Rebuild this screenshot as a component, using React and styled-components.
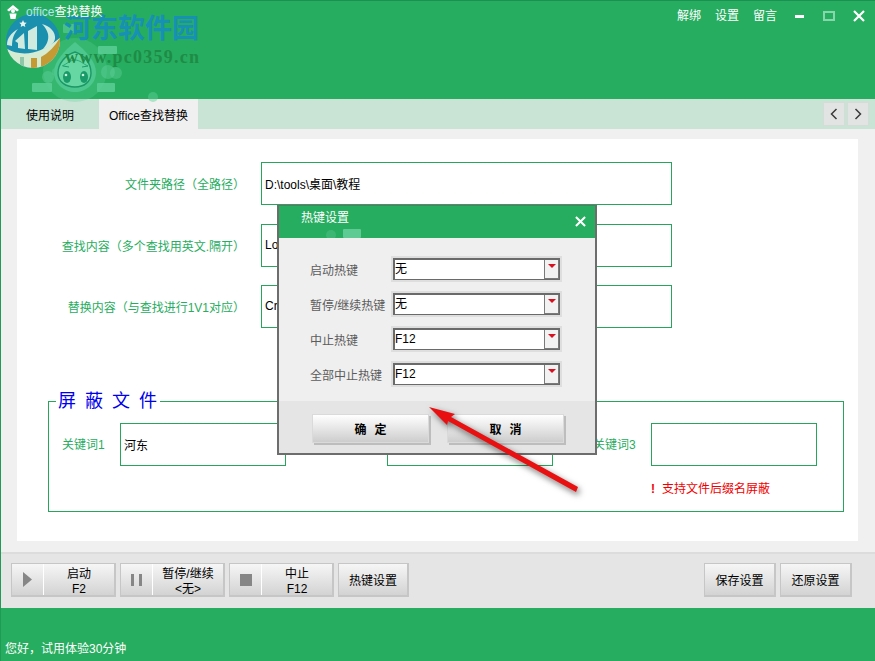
import styled, { createGlobalStyle } from "styled-components";

const GlobalStyle = createGlobalStyle`
  html, body {
    margin: 0;
    padding: 0;
    overflow: hidden;
  }
  body {
    font-family: "Liberation Sans", "Noto Sans CJK SC", sans-serif;
    font-size: 12px;
  }
  * {
    box-sizing: border-box;
  }
`;

const Window = styled.div`
  position: relative;
  width: 875px;
  height: 661px;
  display: flex;
  flex-direction: column;
  overflow: hidden;
  border-left: 1px solid #1f9a57;
  background: #f0f0f0;
`;

const TitleBar = styled.header`
  height: 99px;
  flex: none;
  display: flex;
  justify-content: space-between;
  align-items: flex-start;
  background: #27ad60;
  border-top: 1px solid #1c8f52;
  color: #fff;
`;

const AppName = styled.div`
  position: relative;
  z-index: 1;
  display: flex;
  align-items: flex-start;
  gap: 7px;
  padding: 4px 0 0 6px;
  line-height: 15px;
`;

const AppNameLatin = styled.span`
  color: #b5e4f2;
`;

const TitleRight = styled.div`
  display: flex;
  align-items: center;
  padding: 6px 1px 0 0;
`;

const MenuLinks = styled.div`
  display: flex;
  gap: 14px;
  margin-right: 7px;
  line-height: 18px;
`;

const WinButton = styled.button`
  width: 30px;
  height: 18px;
  padding: 0;
  border: none;
  background: none;
  display: flex;
  align-items: center;
  justify-content: center;
`;

const Watermark = styled.div`
  position: absolute;
  left: -1px;
  top: 0;
  width: 210px;
  height: 112px;
  pointer-events: none;
`;

const WatermarkName = styled.div`
  position: absolute;
  left: 64px;
  top: 10px;
  font-size: 27px;
  line-height: 38px;
  font-weight: 700;
  white-space: nowrap;
  color: #1690b4;
`;

const WatermarkUrl = styled.div`
  position: absolute;
  left: 65px;
  top: 47px;
  font-family: "Liberation Serif", serif;
  font-size: 18px;
  line-height: 20px;
  font-weight: 700;
  letter-spacing: 1.25px;
  white-space: nowrap;
  color: #1e8c46;
`;

const TabBar = styled.nav`
  height: 30px;
  flex: none;
  display: flex;
  align-items: stretch;
  background: #c9e3d5;
`;

const Tab = styled.div`
  width: ${(p) => (p.$active ? "99px" : "98px")};
  display: flex;
  align-items: center;
  justify-content: center;
  color: #000;
  background: ${(p) => (p.$active ? "#f0f0f0" : "transparent")};
`;

const TabArrows = styled.div`
  margin-left: auto;
  display: flex;
  gap: 2px;
  padding: 3px 6px 3px 0;
`;

const TabArrow = styled.button`
  width: 22px;
  height: 24px;
  padding: 0;
  display: flex;
  align-items: center;
  justify-content: center;
  background: #e1e4e2;
  border: 1px solid #d3dcd6;
`;

const Main = styled.main`
  flex: 1;
  padding: 10px 16px 11px 16px;
`;

const Panel = styled.section`
  width: 841px;
  height: 402px;
  background: #fff;
  padding-top: 23px;
`;

const PathGrid = styled.div`
  display: grid;
  grid-template-columns: 228px 411px;
  grid-auto-rows: 43px;
  column-gap: 16px;
  row-gap: 18.5px;
`;

const FieldLabel = styled.label`
  color: #27ad60;
  text-align: right;
  align-self: center;
  white-space: nowrap;
`;

const TextBox = styled.div`
  border: 1px solid #27a55c;
  background: #fff;
  color: #000;
  display: flex;
  align-items: center;
  padding: 0 0 1px 3px;
  width: ${(p) => p.$width || "auto"};
  height: 43px;
`;

const BlockSet = styled.fieldset`
  margin: 61px 0 0 31px;
  width: 796px;
  height: 123px;
  padding: 10px 0 0 13px;
  border: 1px solid #27a55c;
  min-inline-size: 0;
`;

const BlockTitle = styled.legend`
  width: 104px;
  padding: 0 0 0 2px;
  margin-left: -6px;
  font-size: 18px;
  line-height: 24px;
  letter-spacing: 9px;
  white-space: nowrap;
  color: #0000ee;
`;

const KeywordRow = styled.div`
  display: flex;
`;

const KeywordGroup = styled.div`
  display: flex;
  align-items: center;
  gap: 15px;
  margin-left: ${(p) => p.$offset || 0}px;
`;

const KeywordLabel = styled.span`
  width: 43px;
  color: #27ad60;
  white-space: nowrap;
  margin-top: -3px;
`;

const Notice = styled.div`
  margin: 16px 0 0 589px;
  display: flex;
  gap: 7px;
  color: #f00000;
  line-height: 15px;
`;

const Bang = styled.b`
  width: 4px;
`;

const Toolbar = styled.footer`
  height: 56px;
  flex: none;
  display: flex;
  align-items: flex-start;
  gap: 4px;
  padding: 9px 23px 0 10px;
  background: #e5e5e5;
  border-top: 2px solid #dcdcdc;
`;

const ToolButton = styled.button`
  height: 34px;
  width: ${(p) => p.$width || 105}px;
  margin-left: ${(p) => (p.$pushed ? "auto" : "0")};
  padding: 0;
  display: flex;
  align-items: stretch;
  font: inherit;
  color: #000;
  border: 1px solid #c6c6c6;
  border-right-width: 2px;
  border-bottom-width: 2px;
  background: linear-gradient(#f6f6f6, #d3d3d3);
`;

const ToolIcon = styled.span`
  width: 32px;
  flex: none;
  display: flex;
  align-items: center;
  justify-content: center;
  border-right: 1px solid #fff;
`;

const ToolLabel = styled.span`
  flex: 1;
  display: flex;
  flex-direction: column;
  align-items: center;
  justify-content: center;
  padding-top: 4px;
  line-height: 15px;
`;

const StatusBar = styled.div`
  flex: none;
  height: 53px;
  display: flex;
  align-items: flex-end;
  padding: 0 0 3px 4px;
  background: #27ad60;
  color: #fff;
  line-height: 18px;
`;

const Dialog = styled.div`
  position: absolute;
  left: 276px;
  top: 205px;
  width: 320px;
  height: 250px;
  display: flex;
  flex-direction: column;
  background: #efefef;
  border: 1px solid #6d6d6d;
  border-width: 1px 2px 2px 2px;
`;

const DialogHeader = styled.div`
  position: relative;
  height: 32px;
  flex: none;
  display: flex;
  align-items: flex-start;
  justify-content: space-between;
  padding: 3px 9px 0 22px;
  background: #27ad60;
  color: #fff;
  line-height: 18px;
`;

const DialogClose = styled.span`
  display: flex;
  margin-top: 7px;
`;

const HeaderDecor = styled.svg`
  position: absolute;
  left: 40px;
  top: 20px;
`;

const DialogBody = styled.div`
  flex: 1;
  display: flex;
  flex-direction: column;
  gap: 13px;
  padding: 20px 0 0 31px;
`;

const HotkeyRow = styled.div`
  display: flex;
  align-items: center;
`;

const HotkeyLabel = styled.span`
  width: 83px;
  color: #5c5c5c;
  white-space: nowrap;
`;

const Select = styled.div`
  width: 167px;
  height: 22px;
  display: flex;
  background: #fff;
  border: 2px solid #6a6a6a;
  border-right-width: 1px;
  border-bottom-width: 1px;
  outline: 2px solid #dedede;
  color: #000;
`;

const SelectValue = styled.span`
  flex: 1;
  line-height: 19px;
`;

const SelectDrop = styled.span`
  width: 15px;
  flex: none;
  display: flex;
  justify-content: center;
  padding-top: 4px;
  background: #f2f2f2;
  border: 1px solid #7a7a7a;
  border-width: 0 1px 1px 1px;
`;

const RedCaret = styled.i`
  width: 0;
  height: 0;
  border-left: 4px solid transparent;
  border-right: 4px solid transparent;
  border-top: 4px solid #d80f1e;
`;

const DialogFooter = styled.div`
  height: 52px;
  flex: none;
  display: flex;
  gap: 18px;
  padding: 13px 0 0 33px;
  background: #e5e5e5;
`;

const DialogButton = styled.button`
  width: 117px;
  height: 29px;
  padding: 0 0 0 8px;
  font: inherit;
  font-weight: 700;
  letter-spacing: 8px;
  color: #000;
  border: 1px solid #dadada;
  box-shadow: 2px 2px 0 #bdbdbd;
  background: linear-gradient(#fff, #cdcdcd);
`;

const ArrowOverlay = styled.svg`
  position: absolute;
  left: 419px;
  top: 400px;
  overflow: visible;
  filter: drop-shadow(2px 3px 3px rgba(0, 0, 0, 0.55));
`;

const hotkeys = [
  { label: "启动热键", value: "无" },
  { label: "暂停/继续热键", value: "无" },
  { label: "中止热键", value: "F12" },
  { label: "全部中止热键", value: "F12" },
];

const paths = [
  { label: "文件夹路径（全路径）", value: "D:\\tools\\桌面\\教程" },
  { label: "查找内容（多个查找用英文.隔开）", value: "Lo" },
  { label: "替换内容（与查找进行1V1对应）", value: "Cre" },
];

const keywords = [
  { label: "关键词1", value: "河东", offset: 0 },
  { label: "关键词2", value: "", offset: 43 },
  { label: "关键词3", value: "", offset: 40 },
];

const LogoMark = () => (
  <svg width="210" height="112" viewBox="0 0 210 112">
    <defs>
      <clipPath id="logoDisc">
        <circle cx="33" cy="41" r="27" />
      </clipPath>
    </defs>
    {/* mascot: glow, blobs and the little tags round it */}
    <g fill="#5fd09a">
      <circle cx="75" cy="70" r="32" opacity="0.28" />
      <circle cx="48" cy="77" r="6" opacity="0.45" />
      <circle cx="56" cy="72" r="4" opacity="0.4" />
      <circle cx="108" cy="72" r="7" opacity="0.45" />
      <circle cx="116" cy="73" r="6" opacity="0.4" />
      <circle cx="153" cy="97" r="5" opacity="0.45" />
      <rect x="32" y="83" width="20" height="9" rx="1" opacity="0.8" />
      <rect x="97" y="83" width="18" height="9" rx="1" opacity="0.8" />
      <rect x="98" y="46" width="19" height="8" rx="1" opacity="0.8" />
      <rect x="63" y="24" width="12" height="9" rx="1" opacity="0.6" />
    </g>
    <path d="M75 42 C86 51 96 62 96 72 C96 84 86 92 75 92 C64 92 54 84 54 72 C54 62 64 51 75 42 Z" fill="#4cc78e" />
    <path d="M75 52 C65 55 58 64 58 73 C58 82 66 87 75 87 C84 87 91 82 91 73 C91 64 85 55 75 52 Z" fill="#66d7a3" stroke="#1c9767" strokeWidth="1.4" />
    <path d="M62 66 C67 64 70 60 75 60 C80 60 83 64 88 66" fill="none" stroke="#2aa977" strokeWidth="1" />
    <ellipse cx="67" cy="77" rx="4" ry="6" fill="#1a9a69" />
    <ellipse cx="84" cy="77" rx="4" ry="6" fill="#1a9a69" />
    <circle cx="66" cy="75" r="1.3" fill="#c8f2dd" />
    <circle cx="83" cy="75" r="1.3" fill="#c8f2dd" />
    <path d="M63 66 L69 67 M88 66 L82 67" stroke="#1a9a69" strokeWidth="1" fill="none" />

    {/* round site logo */}
    <g clipPath="url(#logoDisc)">
      <rect x="5" y="13" width="56" height="56" fill="#1a8fae" />
      <path d="M4 47 Q30 64 62 36 L64 72 L4 72 Z" fill="#d6ecd2" />
      <path d="M41 57 Q54 50 62 34 L64 72 L41 72 Z" fill="#c49a35" />
      <rect x="31" y="58" width="6" height="12" fill="#c49a35" />
      <rect x="20" y="57" width="4" height="12" fill="#8fc7a8" />
    </g>
    <path d="M7 45 C7 38 11 33 18 29 C14 34 12 38 12 46 Z" fill="#cfeadf" />
    <path d="M15 41 L24 33 L25 49 L18 48 L18 43 Z" fill="#cfeadf" />
    <path d="M28 31 L37 26 L37 50 L28 49 Z" fill="#cfeadf" />
    <path d="M42 24 C50 26 56 32 55 39 C54 44 49 47 43 49 C47 44 49 40 48 34 C47 30 45 27 42 24 Z" fill="#cfeadf" />
    <path d="M23 20 l1.1 2.4 2.6 .3 -1.9 1.8 .5 2.6 -2.3 -1.3 -2.3 1.3 .5 -2.6 -1.9 -1.8 2.6 -.3 z" fill="#e7f5ee" />
  </svg>
);

const AppGlyph = () => (
  <svg width="12" height="14" viewBox="0 0 12 14">
    <path d="M6 0 L12 5 L10 6.5 L6 3.5 L2 6.5 L0 5 Z" fill="#fff" />
    <circle cx="6" cy="6" r="2" fill="#fff" />
    <path d="M2.5 8.5 L9.5 8.5 L8.5 14 L3.5 14 Z" fill="#fff" />
  </svg>
);

const Chevron = ({ dir }) => (
  <svg width="8" height="12" viewBox="0 0 8 12">
    <path
      d={dir === "left" ? "M6.5 1 L1.5 6 L6.5 11" : "M1.5 1 L6.5 6 L1.5 11"}
      fill="none"
      stroke="#3a3a3a"
      strokeWidth="1.5"
    />
  </svg>
);

const CloseCross = ({ size }) => (
  <svg width={size} height={size} viewBox="0 0 12 12">
    <path d="M1 1 L11 11 M11 1 L1 11" stroke="#fff" strokeWidth="2.2" fill="none" />
  </svg>
);

const PlayIcon = () => (
  <svg width="9" height="15" viewBox="0 0 9 15">
    <path d="M0 0 L9 7.5 L0 15 Z" fill="#868686" />
  </svg>
);

const PauseIcon = () => (
  <svg width="11" height="12" viewBox="0 0 11 12">
    <path d="M0 0 H3 V12 H0 Z M8 0 H11 V12 H8 Z" fill="#868686" />
  </svg>
);

const StopIcon = () => (
  <svg width="12" height="12" viewBox="0 0 12 12">
    <rect width="12" height="12" fill="#868686" />
  </svg>
);

export default function App() {
  return (
    <Window>
      <GlobalStyle />
      <TitleBar>
        <AppName>
          <AppGlyph />
          <span>
            <AppNameLatin>office</AppNameLatin>查找替换
          </span>
        </AppName>
        <TitleRight>
          <MenuLinks>
            <span>解绑</span>
            <span>设置</span>
            <span>留言</span>
          </MenuLinks>
          <WinButton>
            <svg width="9" height="3" viewBox="0 0 9 3">
              <rect width="9" height="3" fill="#fff" />
            </svg>
          </WinButton>
          <WinButton>
            <svg width="12" height="10" viewBox="0 0 12 10">
              <rect x="1" y="1" width="10" height="8" fill="none" stroke="#86d8ac" strokeWidth="2" />
            </svg>
          </WinButton>
          <WinButton>
            <CloseCross size={12} />
          </WinButton>
        </TitleRight>
      </TitleBar>

      <TabBar>
        <Tab>使用说明</Tab>
        <Tab $active>Office查找替换</Tab>
        <TabArrows>
          <TabArrow>
            <Chevron dir="left" />
          </TabArrow>
          <TabArrow>
            <Chevron dir="right" />
          </TabArrow>
        </TabArrows>
      </TabBar>

      <Main>
        <Panel>
          <PathGrid>
            {paths.map((p) => (
              <div key={p.label} style={{ display: "contents" }}>
                <FieldLabel>{p.label}</FieldLabel>
                <TextBox>{p.value}</TextBox>
              </div>
            ))}
          </PathGrid>
          <BlockSet>
            <BlockTitle>屏蔽文件</BlockTitle>
            <KeywordRow>
              {keywords.map((k) => (
                <KeywordGroup key={k.label} $offset={k.offset}>
                  <KeywordLabel>{k.label}</KeywordLabel>
                  <TextBox $width="166px">{k.value}</TextBox>
                </KeywordGroup>
              ))}
            </KeywordRow>
            <Notice>
              <Bang>!</Bang>
              <span>支持文件后缀名屏蔽</span>
            </Notice>
          </BlockSet>
        </Panel>
      </Main>

      <Toolbar>
        <ToolButton>
          <ToolIcon>
            <PlayIcon />
          </ToolIcon>
          <ToolLabel>
            <span>启动</span>
            <span>F2</span>
          </ToolLabel>
        </ToolButton>
        <ToolButton>
          <ToolIcon>
            <PauseIcon />
          </ToolIcon>
          <ToolLabel>
            <span>暂停/继续</span>
            <span>&lt;无&gt;</span>
          </ToolLabel>
        </ToolButton>
        <ToolButton>
          <ToolIcon>
            <StopIcon />
          </ToolIcon>
          <ToolLabel>
            <span>中止</span>
            <span>F12</span>
          </ToolLabel>
        </ToolButton>
        <ToolButton $width={71}>
          <ToolLabel>热键设置</ToolLabel>
        </ToolButton>
        <ToolButton $width={72} $pushed>
          <ToolLabel>保存设置</ToolLabel>
        </ToolButton>
        <ToolButton $width={72}>
          <ToolLabel>还原设置</ToolLabel>
        </ToolButton>
      </Toolbar>

      <StatusBar>您好，试用体验30分钟</StatusBar>

      <Watermark>
        <LogoMark />
        <WatermarkName>河东软件园</WatermarkName>
        <WatermarkUrl>www.pc0359.cn</WatermarkUrl>
      </Watermark>

      <Dialog>
        <DialogHeader>
          <span>热键设置</span>
          <DialogClose>
            <CloseCross size={11} />
          </DialogClose>
          <HeaderDecor width="50" height="12" viewBox="0 0 50 12">
            <circle cx="12" cy="9" r="5" fill="#3cb673" />
            <rect x="24" y="3" width="18" height="9" rx="1" fill="#5ecb94" />
          </HeaderDecor>
        </DialogHeader>
        <DialogBody>
          {hotkeys.map((h) => (
            <HotkeyRow key={h.label}>
              <HotkeyLabel>{h.label}</HotkeyLabel>
              <Select>
                <SelectValue>{h.value}</SelectValue>
                <SelectDrop>
                  <RedCaret />
                </SelectDrop>
              </Select>
            </HotkeyRow>
          ))}
        </DialogBody>
        <DialogFooter>
          <DialogButton>确定</DialogButton>
          <DialogButton>取消</DialogButton>
        </DialogFooter>
      </Dialog>

      <ArrowOverlay width="165" height="100" viewBox="0 0 165 100">
        <path d="M9 7 L35 14 L31 17 L158 87 L156 92 L28 21 L27 25 Z" fill="#e81010" />
      </ArrowOverlay>
    </Window>
  );
}
